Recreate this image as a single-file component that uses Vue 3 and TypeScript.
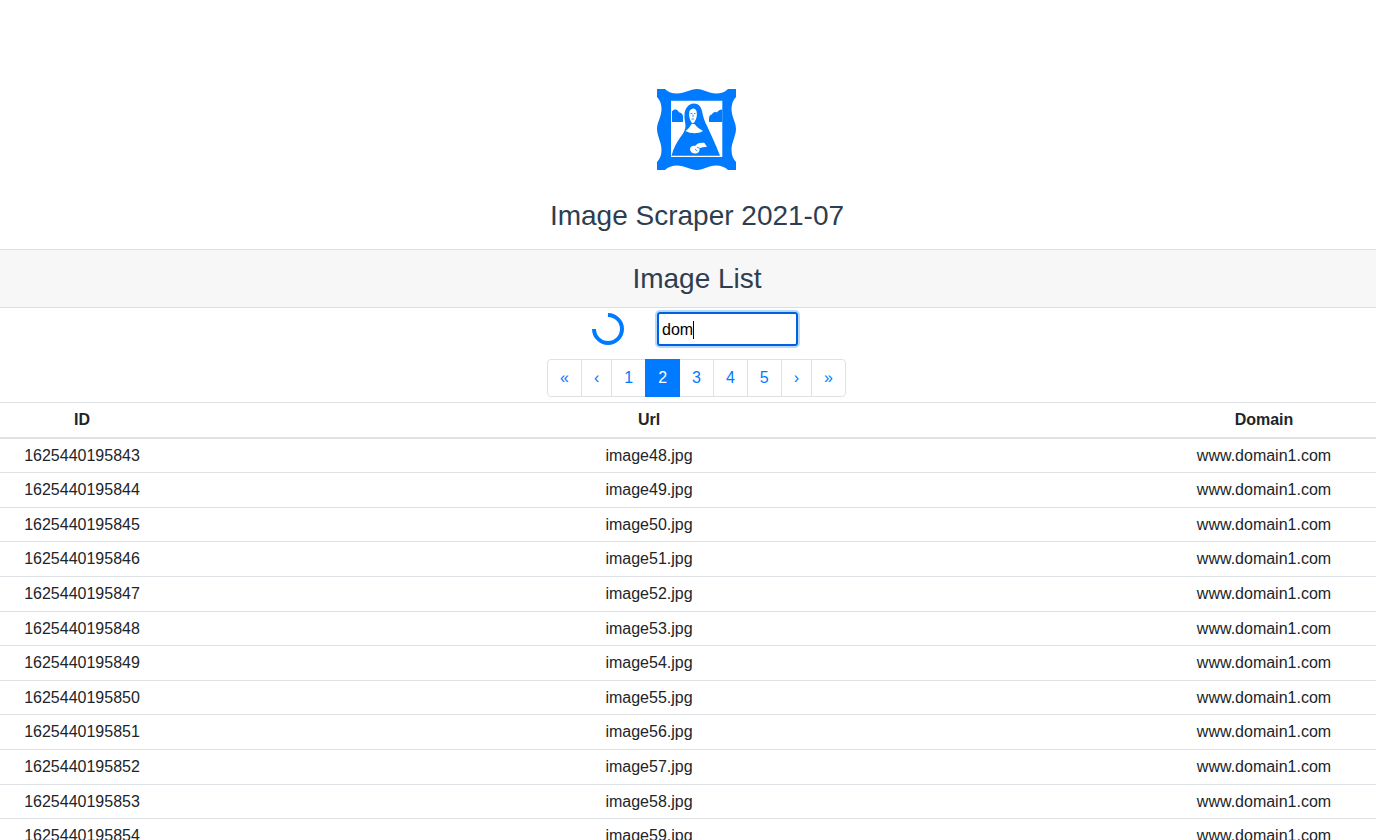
<template>
  <div class="page">
    <header class="brand">
      <svg class="logo" viewBox="0 0 80 81" width="80" height="81" aria-label="logo">
        <path
          fill="#007bff"
          fill-rule="evenodd"
          d="M0 0H8C11 3 15 4.500 20 4.500C28 4.500 33 0 40 0C47 0 51 4.500 59 4.500C64 4.500 68 3 71 0H79V8C76 11 74.500 15 74.500 20C74.500 28 79 33 79 40C79 47 74.500 53 74.500 61C74.500 66 76 70 79 73V81H71C68 78 64 76.500 59 76.500C51 76.500 47 81 40 81C33 81 28 76.500 20 76.500C15 76.500 11 78 8 81H0V73C3 70 4.500 66 4.500 61C4.500 53 0 47 0 40C0 33 4.500 28 4.500 20C4.500 15 3 11 0 8ZM14 11.700V68H65.300V11.700Z"
        />
        <path
          fill="#007bff"
          d="M15 33V22.500C16.500 20.500 18.500 20 20 21C21.500 22 21.500 23 22.500 23.500C24 23.500 25.500 25 26 27V33ZM65.300 33V20.500C63 20.500 61 21.500 60 23.500C58 22.500 55.500 23.500 55 25.500C53 25.500 52 27.500 52 29.500V33ZM14.500 66.700C16.500 59 20 53 23.500 48C26.500 44 28.500 41 28.500 37C28.500 33 27 30 27.500 25C28 20 31 14.500 37 14.500C41.500 14.500 44 17.500 45 22C46 27 47.500 33 50.500 38C54 46 59 56 63 66.700Z"
        />
        <path
          fill="#fff"
          d="M32.500 22C34.500 18.500 38.500 18.500 39.500 22C40.500 26 39.500 30 37.500 33C36.500 34.500 35 34.500 34.500 33.500C32.500 30.500 31.500 26 32.500 22ZM28.500 42C31 40 33 38 34.500 35L37.500 35C39.500 38 43 40 46 42C41 45 34 45 28.500 42ZM33 60C33.500 57 36 56.500 38 57C40 54 44 53 47.500 54L50 58C47 58 44.500 58 42.500 59.500C43 62.500 41 64.500 38 64.500C35 64.500 33 62.500 33 60Z"
        />
        <path
          fill="none"
          stroke="#007bff"
          stroke-width="0.8"
          d="M33.500 24.500H35.500M37 24.500H38.500M36 25.500V28M34.500 30H37M40 58L44 60M38 60L40 62"
        />
      </svg>
      <h1 class="app-title">Image Scraper 2021-07</h1>
    </header>

    <h2 class="list-title">Image List</h2>

    <div class="search-row">
      <span class="spinner"></span>
      <span class="search-box">dom<i class="caret"></i></span>
    </div>

    <nav class="pager">
      <a
        v-for="item in pages"
        :key="item"
        class="page-link"
        :class="{ active: item === '2' }"
      >{{ item }}</a>
    </nav>

    <table class="image-table">
      <colgroup>
        <col style="width: 164px" />
        <col style="width: 970px" />
        <col style="width: 260px" />
      </colgroup>
      <thead>
        <tr>
          <th>ID</th>
          <th>Url</th>
          <th>Domain</th>
        </tr>
      </thead>
      <tbody>
        <tr v-for="row in rows" :key="row.id">
          <td>{{ row.id }}</td>
          <td>{{ row.url }}</td>
          <td>{{ row.domain }}</td>
        </tr>
      </tbody>
    </table>
  </div>
</template>

<script setup lang="ts">
interface ImageRow {
  id: number
  url: string
  domain: string
}

const pages = ['«', '‹', '1', '2', '3', '4', '5', '›', '»']

const rows: ImageRow[] = Array.from({ length: 12 }, (_, i) => ({
  id: 1625440195843 + i,
  url: `image${48 + i}.jpg`,
  domain: 'www.domain1.com'
}))
</script>

<style>
html,
body {
  height: 840px;
  overflow: hidden;
}
</style>

<style scoped>
.page {
  width: 1394px;
  font-family: "Liberation Sans", Arial, sans-serif;
  font-size: 16px;
  line-height: 1.5;
  color: #212529;
}

.brand {
  display: flex;
  flex-direction: column;
  align-items: center;
  padding-top: 89px;
}

.logo {
  display: block;
}

.app-title {
  margin: 29px 0 16px;
  font-size: 28px;
  font-weight: 400;
  line-height: 34px;
  color: #2c3e50;
}

.list-title {
  margin: 0;
  padding: 12px 0 11px;
  font-size: 28px;
  font-weight: 400;
  line-height: 34px;
  text-align: center;
  color: #2c3e50;
  background: #f7f7f7;
  border-top: 1px solid #dfdfdf;
  border-bottom: 1px solid #dfdfdf;
}

.search-row {
  display: flex;
  justify-content: center;
  align-items: flex-start;
  gap: 33px;
  height: 43px;
  padding: 5px 4px 0 0;
  box-sizing: border-box;
}

.spinner {
  width: 32px;
  height: 32px;
  box-sizing: border-box;
  border: 4px solid #007bff;
  border-top-color: transparent;
  border-radius: 50%;
  transform: rotate(-45deg);
}

.search-box {
  display: flex;
  align-items: center;
  width: 141px;
  height: 34px;
  margin-top: -1px;
  box-sizing: border-box;
  padding: 1px 3px 0;
  color: #000;
  font-size: 16px;
  border: 2px solid #0060df;
  border-radius: 3px;
  box-shadow: 0 0 0 2px #b3d9fb;
}

.caret {
  width: 1px;
  height: 18px;
  background: #000;
}

.pager {
  display: flex;
  justify-content: center;
  margin-top: 8px;
  padding-right: 1px;
}

.page-link {
  display: block;
  margin-left: -1px;
  padding: 8px 12px;
  line-height: 20px;
  color: #007bff;
  background: #fff;
  border: 1px solid #dee2e6;
}

.page-link:first-child {
  margin-left: 0;
  border-radius: 4px 0 0 4px;
}

.page-link:last-child {
  border-radius: 0 4px 4px 0;
}

.page-link.active {
  position: relative;
  color: #fff;
  background: #007bff;
  border-color: #007bff;
}

.image-table {
  width: 1394px;
  margin-top: 5px;
  table-layout: fixed;
  border-collapse: collapse;
}

.image-table th,
.image-table td {
  padding: 5.1px 4.8px 4.5px;
  text-align: center;
  vertical-align: top;
  border-top: 1px solid #dee2e6;
}

.image-table th {
  font-weight: 700;
  border-bottom: 2px solid #dee2e6;
}
</style>
